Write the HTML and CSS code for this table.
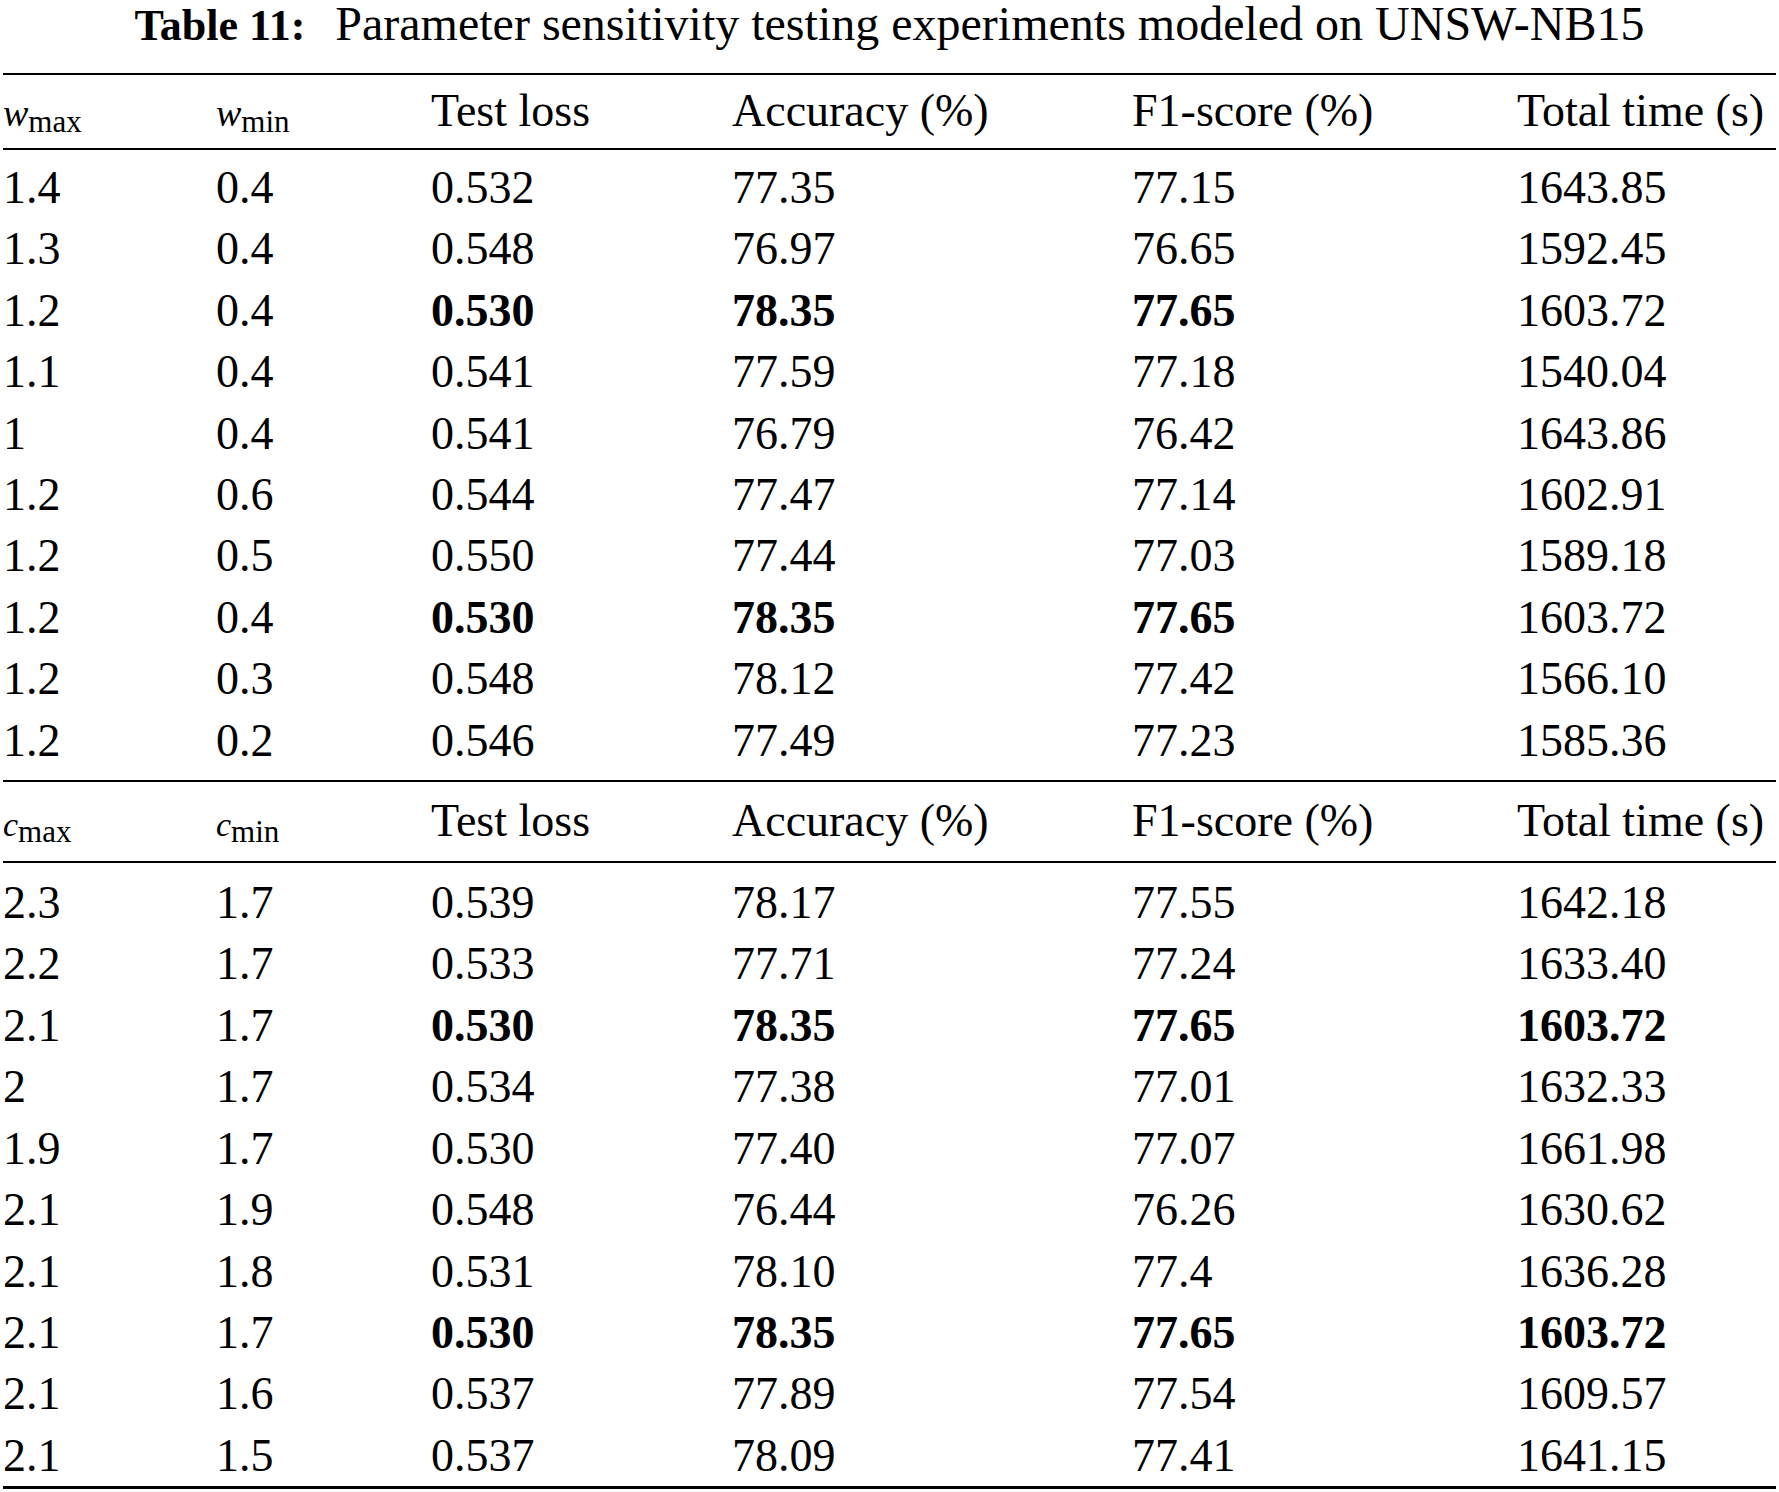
FILE: index.html
```html
<!DOCTYPE html>
<html lang="en">
<head>
<meta charset="utf-8">
<title>Table 11</title>
<link rel="stylesheet" href="styles.css">
</head>
<body>
<div class="title"><span class="title-label">Table 11:</span><span class="title-text">Parameter sensitivity testing experiments modeled on UNSW-NB15</span></div>
<table class="results">
<colgroup>
<col class="c1"><col class="c2"><col class="c3"><col class="c4"><col class="c5"><col class="c6">
</colgroup>
<thead>
<tr class="head head-first">
<th><span class="var var-w">w</span><span class="sub">max</span></th>
<th><span class="var var-w">w</span><span class="sub">min</span></th>
<th>Test loss</th>
<th>Accuracy (%)</th>
<th>F1-score (%)</th>
<th>Total time (s)</th>
</tr>
</thead>
<tbody class="group group-first">
<tr><td>1.4</td><td>0.4</td><td>0.532</td><td>77.35</td><td>77.15</td><td>1643.85</td></tr>
<tr><td>1.3</td><td>0.4</td><td>0.548</td><td>76.97</td><td>76.65</td><td>1592.45</td></tr>
<tr><td>1.2</td><td>0.4</td><td class="b">0.530</td><td class="b">78.35</td><td class="b">77.65</td><td>1603.72</td></tr>
<tr><td>1.1</td><td>0.4</td><td>0.541</td><td>77.59</td><td>77.18</td><td>1540.04</td></tr>
<tr><td>1</td><td>0.4</td><td>0.541</td><td>76.79</td><td>76.42</td><td>1643.86</td></tr>
<tr><td>1.2</td><td>0.6</td><td>0.544</td><td>77.47</td><td>77.14</td><td>1602.91</td></tr>
<tr><td>1.2</td><td>0.5</td><td>0.550</td><td>77.44</td><td>77.03</td><td>1589.18</td></tr>
<tr><td>1.2</td><td>0.4</td><td class="b">0.530</td><td class="b">78.35</td><td class="b">77.65</td><td>1603.72</td></tr>
<tr><td>1.2</td><td>0.3</td><td>0.548</td><td>78.12</td><td>77.42</td><td>1566.10</td></tr>
<tr><td>1.2</td><td>0.2</td><td>0.546</td><td>77.49</td><td>77.23</td><td>1585.36</td></tr>
</tbody>
<tbody class="subhead">
<tr class="head head-second">
<th><span class="var var-c">c</span><span class="sub">max</span></th>
<th><span class="var var-c">c</span><span class="sub">min</span></th>
<th>Test loss</th>
<th>Accuracy (%)</th>
<th>F1-score (%)</th>
<th>Total time (s)</th>
</tr>
</tbody>
<tbody class="group group-second">
<tr><td>2.3</td><td>1.7</td><td>0.539</td><td>78.17</td><td>77.55</td><td>1642.18</td></tr>
<tr><td>2.2</td><td>1.7</td><td>0.533</td><td>77.71</td><td>77.24</td><td>1633.40</td></tr>
<tr><td>2.1</td><td>1.7</td><td class="b">0.530</td><td class="b">78.35</td><td class="b">77.65</td><td class="b">1603.72</td></tr>
<tr><td>2</td><td>1.7</td><td>0.534</td><td>77.38</td><td>77.01</td><td>1632.33</td></tr>
<tr><td>1.9</td><td>1.7</td><td>0.530</td><td>77.40</td><td>77.07</td><td>1661.98</td></tr>
<tr><td>2.1</td><td>1.9</td><td>0.548</td><td>76.44</td><td>76.26</td><td>1630.62</td></tr>
<tr><td>2.1</td><td>1.8</td><td>0.531</td><td>78.10</td><td>77.4</td><td>1636.28</td></tr>
<tr><td>2.1</td><td>1.7</td><td class="b">0.530</td><td class="b">78.35</td><td class="b">77.65</td><td class="b">1603.72</td></tr>
<tr><td>2.1</td><td>1.6</td><td>0.537</td><td>77.89</td><td>77.54</td><td>1609.57</td></tr>
<tr><td>2.1</td><td>1.5</td><td>0.537</td><td>78.09</td><td>77.41</td><td>1641.15</td></tr>
</tbody>
</table>
</body>
</html>
```
FILE: styles.css
```css
html, body {
  margin: 0;
  padding: 0;
  background: #ffffff;
}

body {
  font-family: "Liberation Serif", "Times New Roman", serif;
  color: #000000;
  width: 1779px;
}

.title {
  font-size: 48px;
  line-height: 46px;
  height: 46px;
  padding-bottom: 27px;
  text-align: center;
  white-space: nowrap;
}

.title-label {
  font-weight: bold;
  font-size: 44px;
  line-height: 1;
  margin-right: 30px;
}

.title-text {
  line-height: 1;
}

.results {
  margin-left: 3px;
  width: 1773px;
  table-layout: fixed;
  border-collapse: separate;
  border-spacing: 0;
  font-size: 46px;
}

.c1 { width: 213px; }
.c2 { width: 215px; }
.c3 { width: 301px; }
.c4 { width: 400px; }
.c5 { width: 385px; }
.c6 { width: 259px; }

.results th,
.results td {
  padding: 0;
  text-align: left;
  font-weight: normal;
  white-space: nowrap;
  vertical-align: baseline;
}

.results td {
  line-height: 61.4px;
}

.head th {
  line-height: 61px;
  border-top: 2px solid #000;
  border-bottom: 2px solid #000;
}

.head-first th {
  padding-top: 5px;
  padding-bottom: 7px;
}

.head-second th {
  padding-top: 8px;
  padding-bottom: 10px;
}

.group-first tr:first-child td { padding-top: 7px; }
.group-first tr:last-child td { padding-bottom: 9px; }

.group-second tr:first-child td { padding-top: 9px; }
.group-second tr:last-child td {
  padding-bottom: 0;
  border-bottom: 3px solid #000;
}

.results td.b {
  font-weight: bold;
}

.var {
  font-style: italic;
  line-height: 1;
}

.var-w { font-size: 38px; }
.var-c { font-size: 34px; }

.sub {
  font-size: 31px;
  line-height: 1;
  vertical-align: -6px;
}
```
